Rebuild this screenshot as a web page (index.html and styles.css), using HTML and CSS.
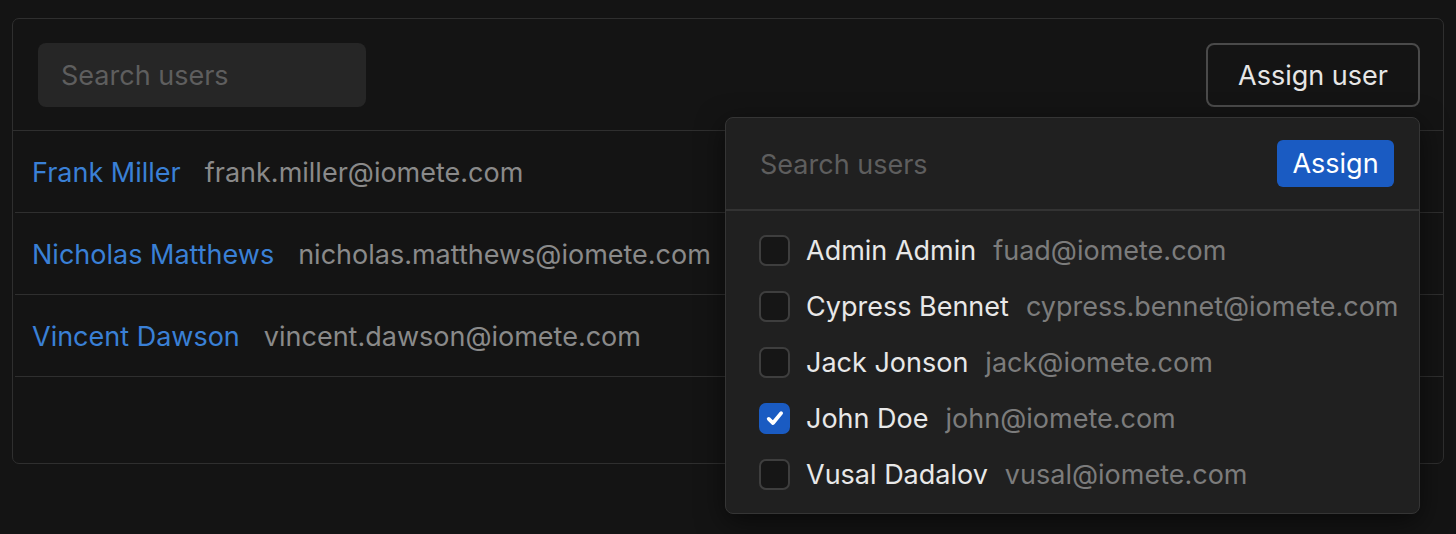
FILE: index.html
```html
<!DOCTYPE html>
<html>
<head>
<meta charset="utf-8">
<link rel="stylesheet" href="styles.css">
</head>
<body>
<div class="card">
  <div class="card-header">
    <div class="search">Search users</div>
    <button class="btn-outline">Assign user</button>
  </div>
  <div class="row"><span class="name">Frank Miller</span><span class="email">frank.miller@iomete.com</span></div>
  <div class="row"><span class="name">Nicholas Matthews</span><span class="email">nicholas.matthews@iomete.com</span></div>
  <div class="row"><span class="name">Vincent Dawson</span><span class="email">vincent.dawson@iomete.com</span></div>

  <div class="dropdown">
    <div class="dd-head">
      <span class="dd-search">Search users</span>
      <button class="btn-primary">Assign</button>
    </div>
    <div class="dd-list">
      <div class="item"><span class="cb"></span><span class="iname">Admin Admin</span><span class="imail">fuad@iomete.com</span></div>
      <div class="item"><span class="cb"></span><span class="iname">Cypress Bennet</span><span class="imail">cypress.bennet@iomete.com</span></div>
      <div class="item"><span class="cb"></span><span class="iname">Jack Jonson</span><span class="imail">jack@iomete.com</span></div>
      <div class="item"><span class="cb checked"><svg width="22" height="22" viewBox="0 0 20 20"><path d="M4.3 10.8 L8.2 14.6 L15.6 5.6" fill="none" stroke="#fff" stroke-width="3.4" stroke-linecap="round" stroke-linejoin="round"/></svg></span><span class="iname">John Doe</span><span class="imail">john@iomete.com</span></div>
      <div class="item"><span class="cb"></span><span class="iname">Vusal Dadalov</span><span class="imail">vusal@iomete.com</span></div>
    </div>
  </div>
</div>
</body>
</html>
```
FILE: styles.css
```css
* { box-sizing: border-box; }
html, body { margin: 0; padding: 0; }
body {
  background: #141414;
  font-family: Inter, "Noto Sans", sans-serif;
  font-size: 27px;
  color: #e6e6e6;
  padding: 18px 12px 0 12px;
  height: 534px;
  overflow: hidden;
}
.card {
  position: relative;
  border: 1px solid #2f2f2f;
  border-radius: 7px;
  height: 446px;
  background: #141414;
}
.card-header {
  display: flex;
  justify-content: space-between;
  align-items: center;
  padding: 24px 23px 23px 25px;
  border-bottom: 1px solid #2f2f2f;
}
.search {
  width: 328px;
  height: 64px;
  background: #262626;
  border-radius: 8px;
  padding-left: 23px;
  display: flex;
  align-items: center;
  color: #5e5e5e;
}
.btn-outline {
  font: inherit;
  height: 64px;
  width: 214px;
  background: #141414;
  color: #e6e6e6;
  border: 2px solid #4a4a4a;
  border-radius: 8px;
}
.row {
  height: 82px;
  border-bottom: 1px solid #2f2f2f;
  margin-left: 2px;
  display: flex;
  align-items: center;
  gap: 24px;
  padding-left: 17px;
  padding-top: 2px;
}
.name { color: #3a80d6; }
.email { color: #8a8a8a; }
.dropdown {
  position: absolute;
  left: 712px;
  top: 98px;
  width: 695px;
  height: 397px;
  background: #202020;
  border: 1px solid #353535;
  border-radius: 8px;
  box-shadow: 0 8px 28px rgba(0,0,0,0.55);
}
.dd-head {
  height: 93px;
  border-bottom: 2px solid #333;
  display: flex;
  align-items: center;
  justify-content: space-between;
  padding: 0 25px 0 34px;
}
.dd-search { color: #5e5e5e; padding-top: 2px; }
.btn-primary {
  font: inherit;
  color: #fff;
  background: #1a5bc2;
  border: none;
  border-radius: 6px;
  width: 117px;
  height: 47px;
  margin-top: -1px;
}
.dd-list {
  padding-top: 11px;
}
.item {
  height: 56px;
  display: flex;
  align-items: center;
  padding-left: 33px;
}
.cb {
  width: 31px;
  height: 31px;
  border: 2px solid #3e3e3e;
  border-radius: 7px;
  background: #161616;
  margin-right: 16px;
  display: flex;
  align-items: center;
  justify-content: center;
}
.cb.checked {
  background: #1a5bc2;
  border-color: #1a5bc2;
}
.iname { color: #e8e8e8; margin-right: 17px; }
.imail { color: #7c7c7c; }
```
